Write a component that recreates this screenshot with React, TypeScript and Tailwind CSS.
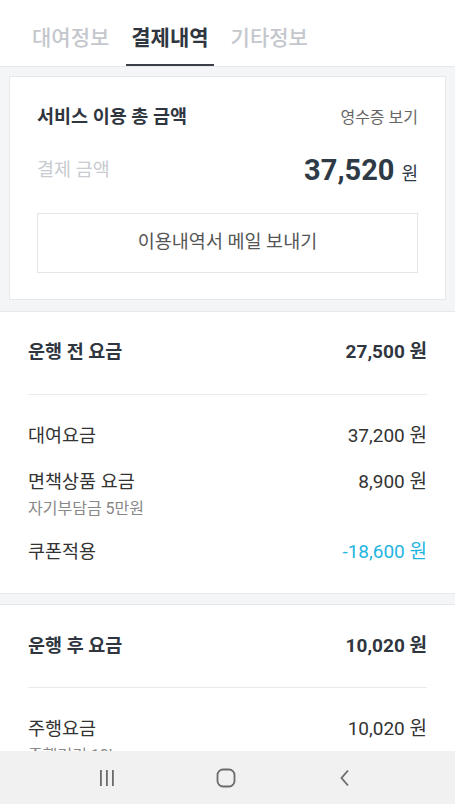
import React from "react";

const font = { fontFamily: 'Roboto, "Noto Sans CJK KR", sans-serif' };

function Row({ label, amount, bold, sub, amountClass }: { label: string; amount: string; bold?: boolean; sub?: string; amountClass?: string }) {
  return (
    <div>
      <div className="flex items-center justify-between h-[24px]">
        <span className={`text-[18.5px] leading-[24px] ${bold ? "font-bold text-[#2f3640]" : "text-[#333]"}`}>{label}</span>
        <span className={`text-[19px] leading-[24px] ${bold ? "font-bold text-[#2f3640]" : amountClass ?? "text-[#333]"}`}>{amount}</span>
      </div>
      {sub && <div className="mt-[5px] text-[16px] leading-[20px] text-[#888]">{sub}</div>}
    </div>
  );
}

export default function App() {
  return (
    <div style={font} className="w-[455px] h-[804px] flex flex-col bg-[#f4f5f7] overflow-hidden">
      <div className="flex-1 overflow-hidden">
        <div className="h-[67px] bg-white border-b border-[#e6e8eb] flex items-end pl-[27px] gap-[12px]">
          <div className="px-[5px] pb-[14px] leading-[24px] text-[21px] text-[#c4c7cc] font-medium border-b-2 border-transparent">대여정보</div>
          <div className="px-[5px] pb-[14px] leading-[24px] text-[21px] text-[#2f3640] font-bold border-b-2 border-[#3a3f47]">결제내역</div>
          <div className="px-[5px] pb-[14px] leading-[24px] text-[21px] text-[#c4c7cc] font-medium border-b-2 border-transparent">기타정보</div>
        </div>

        <div className="mx-[9px] mt-[9px] bg-white border border-[#e6e8eb] px-[27px] pt-[29px] pb-[26px]">
          <div className="flex items-center justify-between h-[24px]">
            <span className="text-[18.5px] font-bold text-[#2f3640]">서비스 이용 총 금액</span>
            <span className="text-[16px] text-[#666]">영수증 보기</span>
          </div>
          <div className="mt-[24px] flex items-center justify-between h-[34px]">
            <span className="text-[18.5px] text-[#c8cbd0]">결제 금액</span>
            <span className="flex items-baseline">
              <span className="text-[29px] font-bold text-[#2f3a47]">37,520</span>
              <span className="ml-[7px] text-[18px] text-[#2f3a47]">원</span>
            </span>
          </div>
          <div className="mt-[25px] h-[60px] border border-[#e3e5e8] flex items-center justify-center text-[18.5px] text-[#555]">
            이용내역서 메일 보내기
          </div>
        </div>

        <div className="mt-[11px] bg-white border-y border-[#e6e8eb] px-[28px] pt-[28px] pb-[29px]">
          <Row label="운행 전 요금" amount="27,500 원" bold />
          <div className="mt-[30px] h-px bg-[#e8eaed]" />
          <div className="mt-[29px]"><Row label="대여요금" amount="37,200 원" /></div>
          <div className="mt-[22px]"><Row label="면책상품 요금" amount="8,900 원" sub="자기부담금 5만원" /></div>
          <div className="mt-[21px]"><Row label="쿠폰적용" amount="-18,600 원" amountClass="text-[#1fb5e2]" /></div>
        </div>

        <div className="mt-[10px] bg-white border-y border-[#e6e8eb] px-[28px] pt-[29px] pb-[29px]">
          <Row label="운행 후 요금" amount="10,020 원" bold />
          <div className="mt-[29px] h-px bg-[#e8eaed]" />
          <div className="mt-[29px]"><Row label="주행요금" amount="10,020 원" sub="주행거리 10km" /></div>
        </div>
      </div>

      <div className="h-[53px] bg-[#f1f1f1] flex items-center pl-[97px] gap-[99px] shrink-0">
        <svg width="20" height="20" viewBox="0 0 20 20" className="text-[#6b6b6b]">
          <rect x="3" y="2" width="1.8" height="16" fill="currentColor" />
          <rect x="9" y="2" width="1.8" height="16" fill="currentColor" />
          <rect x="15" y="2" width="1.8" height="16" fill="currentColor" />
        </svg>
        <svg width="20" height="20" viewBox="0 0 20 20" className="text-[#6b6b6b]">
          <rect x="1.5" y="1.5" width="17" height="17" rx="5.5" fill="none" stroke="currentColor" strokeWidth="1.8" />
        </svg>
        <svg width="20" height="20" viewBox="0 0 20 20" className="text-[#6b6b6b]">
          <path d="M13 2.5 L6.5 10 L13 17.5" fill="none" stroke="currentColor" strokeWidth="1.8" />
        </svg>
      </div>
    </div>
  );
}
